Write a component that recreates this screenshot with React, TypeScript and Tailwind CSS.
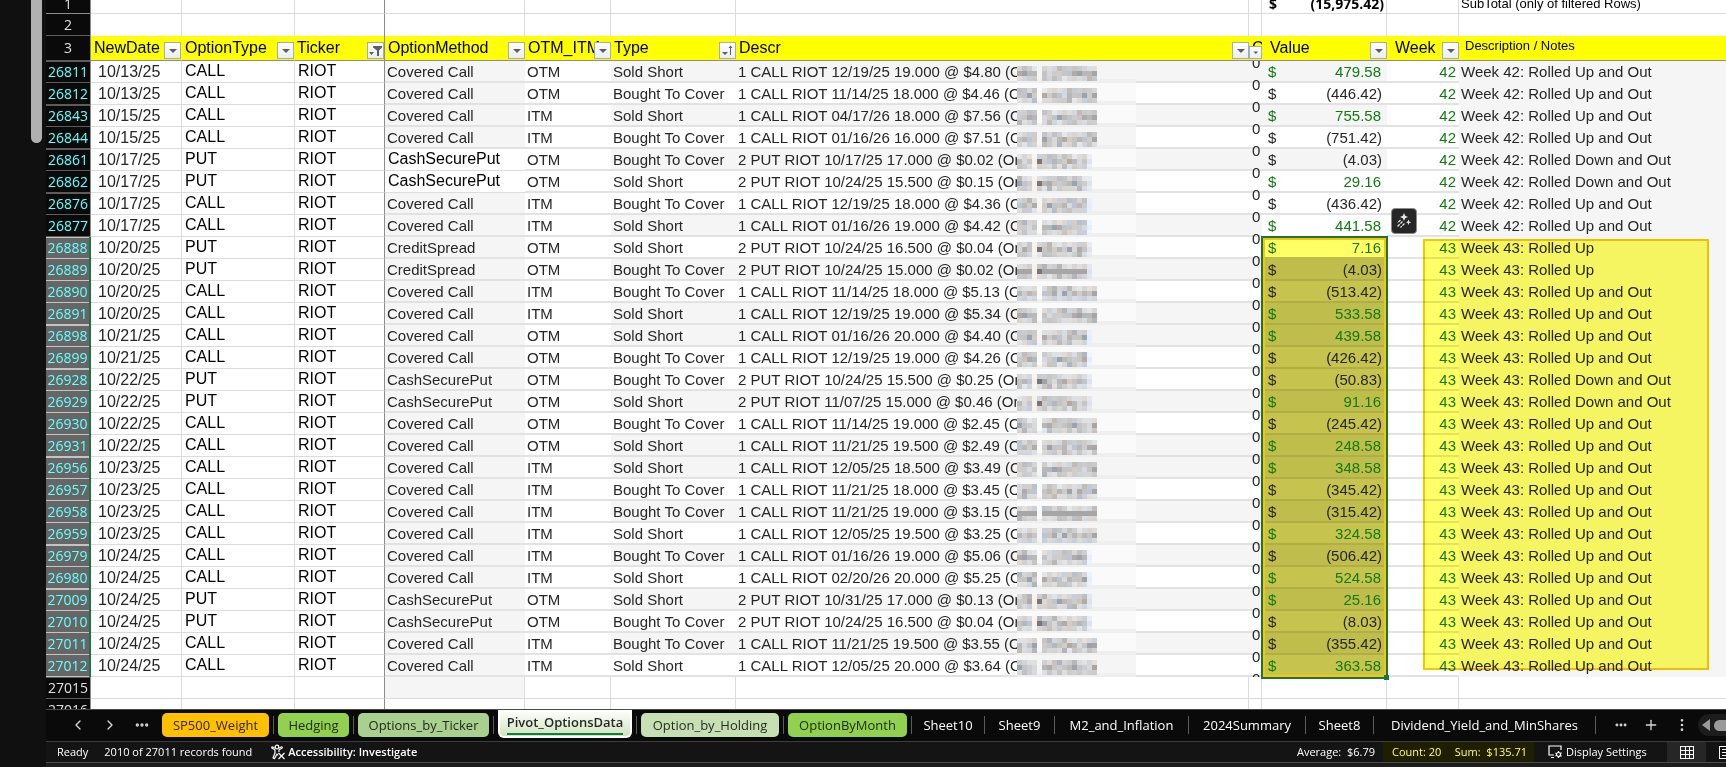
import React from 'react';
import clsx from 'clsx';
import { ChevronLeft, ChevronRight, Ellipsis, EllipsisVertical, Plus } from 'lucide-react';

interface Trade {
  row: string;
  date: string;
  type: 'CALL' | 'PUT';
  method: string;
  otm: string;
  side: string;
  descr: string;
  value: string;
  note: string;
  shaded?: boolean;
  gapAfter?: boolean;
}

const SHORT = 'Sold Short';
const COVER = 'Bought To Cover';
const CC = 'Covered Call';
const CSP = 'CashSecurePut';
const UP = 'Rolled Up';
const UP_OUT = 'Rolled Up and Out';
const DOWN_OUT = 'Rolled Down and Out';

const TRADES: Trade[] = [
  { row: '26811', date: '10/13/25', type: 'CALL', method: CC, otm: 'OTM', side: SHORT, descr: '12/19/25 19.000 @ $4.80', value: '479.58', note: UP_OUT, shaded: true },
  { row: '26812', date: '10/13/25', type: 'CALL', method: CC, otm: 'OTM', side: COVER, descr: '11/14/25 18.000 @ $4.46', value: '(446.42)', note: UP_OUT, gapAfter: true },
  { row: '26843', date: '10/15/25', type: 'CALL', method: CC, otm: 'ITM', side: SHORT, descr: '04/17/26 18.000 @ $7.56', value: '755.58', note: UP_OUT, shaded: true },
  { row: '26844', date: '10/15/25', type: 'CALL', method: CC, otm: 'ITM', side: COVER, descr: '01/16/26 16.000 @ $7.51', value: '(751.42)', note: UP_OUT, gapAfter: true },
  { row: '26861', date: '10/17/25', type: 'PUT', method: CSP, otm: 'OTM', side: COVER, descr: '10/17/25 17.000 @ $0.02', value: '(4.03)', note: DOWN_OUT, shaded: true },
  { row: '26862', date: '10/17/25', type: 'PUT', method: CSP, otm: 'OTM', side: SHORT, descr: '10/24/25 15.500 @ $0.15', value: '29.16', note: DOWN_OUT, gapAfter: true },
  { row: '26876', date: '10/17/25', type: 'CALL', method: CC, otm: 'ITM', side: COVER, descr: '12/19/25 18.000 @ $4.36', value: '(436.42)', note: UP_OUT },
  { row: '26877', date: '10/17/25', type: 'CALL', method: CC, otm: 'ITM', side: SHORT, descr: '01/16/26 19.000 @ $4.42', value: '441.58', note: UP_OUT, shaded: true, gapAfter: true },
  { row: '26888', date: '10/20/25', type: 'PUT', method: 'CreditSpread', otm: 'OTM', side: SHORT, descr: '10/24/25 16.500 @ $0.04', value: '7.16', note: UP },
  { row: '26889', date: '10/20/25', type: 'PUT', method: 'CreditSpread', otm: 'OTM', side: COVER, descr: '10/24/25 15.000 @ $0.02', value: '(4.03)', note: UP, shaded: true },
  { row: '26890', date: '10/20/25', type: 'CALL', method: CC, otm: 'ITM', side: COVER, descr: '11/14/25 18.000 @ $5.13', value: '(513.42)', note: UP_OUT },
  { row: '26891', date: '10/20/25', type: 'CALL', method: CC, otm: 'ITM', side: SHORT, descr: '12/19/25 19.000 @ $5.34', value: '533.58', note: UP_OUT, shaded: true, gapAfter: true },
  { row: '26898', date: '10/21/25', type: 'CALL', method: CC, otm: 'OTM', side: SHORT, descr: '01/16/26 20.000 @ $4.40', value: '439.58', note: UP_OUT, shaded: true },
  { row: '26899', date: '10/21/25', type: 'CALL', method: CC, otm: 'OTM', side: COVER, descr: '12/19/25 19.000 @ $4.26', value: '(426.42)', note: UP_OUT, gapAfter: true },
  { row: '26928', date: '10/22/25', type: 'PUT', method: CSP, otm: 'OTM', side: COVER, descr: '10/24/25 15.500 @ $0.25', value: '(50.83)', note: DOWN_OUT },
  { row: '26929', date: '10/22/25', type: 'PUT', method: CSP, otm: 'OTM', side: SHORT, descr: '11/07/25 15.000 @ $0.46', value: '91.16', note: DOWN_OUT, shaded: true },
  { row: '26930', date: '10/22/25', type: 'CALL', method: CC, otm: 'OTM', side: COVER, descr: '11/14/25 19.000 @ $2.45', value: '(245.42)', note: UP_OUT },
  { row: '26931', date: '10/22/25', type: 'CALL', method: CC, otm: 'OTM', side: SHORT, descr: '11/21/25 19.500 @ $2.49', value: '248.58', note: UP_OUT, shaded: true, gapAfter: true },
  { row: '26956', date: '10/23/25', type: 'CALL', method: CC, otm: 'ITM', side: SHORT, descr: '12/05/25 18.500 @ $3.49', value: '348.58', note: UP_OUT, shaded: true },
  { row: '26957', date: '10/23/25', type: 'CALL', method: CC, otm: 'ITM', side: COVER, descr: '11/21/25 18.000 @ $3.45', value: '(345.42)', note: UP_OUT },
  { row: '26958', date: '10/23/25', type: 'CALL', method: CC, otm: 'ITM', side: COVER, descr: '11/21/25 19.000 @ $3.15', value: '(315.42)', note: UP_OUT, shaded: true },
  { row: '26959', date: '10/23/25', type: 'CALL', method: CC, otm: 'ITM', side: SHORT, descr: '12/05/25 19.500 @ $3.25', value: '324.58', note: UP_OUT, gapAfter: true },
  { row: '26979', date: '10/24/25', type: 'CALL', method: CC, otm: 'ITM', side: COVER, descr: '01/16/26 19.000 @ $5.06', value: '(506.42)', note: UP_OUT, shaded: true },
  { row: '26980', date: '10/24/25', type: 'CALL', method: CC, otm: 'ITM', side: SHORT, descr: '02/20/26 20.000 @ $5.25', value: '524.58', note: UP_OUT, gapAfter: true },
  { row: '27009', date: '10/24/25', type: 'PUT', method: CSP, otm: 'OTM', side: SHORT, descr: '10/31/25 17.000 @ $0.13', value: '25.16', note: UP_OUT, shaded: true },
  { row: '27010', date: '10/24/25', type: 'PUT', method: CSP, otm: 'OTM', side: COVER, descr: '10/24/25 16.500 @ $0.04', value: '(8.03)', note: UP_OUT },
  { row: '27011', date: '10/24/25', type: 'CALL', method: CC, otm: 'ITM', side: COVER, descr: '11/21/25 19.500 @ $3.55', value: '(355.42)', note: UP_OUT, shaded: true },
  { row: '27012', date: '10/24/25', type: 'CALL', method: CC, otm: 'ITM', side: SHORT, descr: '12/05/25 20.000 @ $3.64', value: '363.58', note: UP_OUT, gapAfter: true },
];

const FIRST_SELECTED = 8;
const SHORT_IDS = [6, 7, 12, 13, 22, 23];

const LINE = 'shadow-[inset_0_-2px_0_#e2e2e2]';
const THIN_LINE = 'border-b border-[#dcdcdc]';

// Pixelated block that hides the order number
const MOSAIC = ['#b9b9ba', '#c9c5c4', '#a8a5a6', '#bdc5d2', '#c4c4c4', '#b3aaa4', '#d6dade', '#9ca2ae', '#cccccc', '#b5b7b9', '#d3cbc6'];

const Mosaic = ({ seed, put }: { seed: number; put: boolean }) => {
  const cols = put || SHORT_IDS.includes(seed) ? 15 : 16;
  const cells: React.ReactNode[] = [];
  for (let y = 0; y < 3; y++) {
    for (let x = 0; x < cols; x++) {
      if (x === 4 && !put) continue;
      const n = (seed * 7 + x * 13 + y * 5 + ((x * y * seed) % 11)) % MOSAIC.length;
      let fill = MOSAIC[n];
      if (put && x === 3) fill = '#f6f1ea';
      if (put && x === 4 && y === 1) fill = '#7d7574';
      if (x === cols - 1 && cols === 15) fill = put ? '#dfe4ec' : '#e3f0fb';
      cells.push(
        <rect key={`${x}-${y}`} x={x * 5} y={5 + y * 5} width="5" height="5" fill={fill} opacity={y === 1 ? 1 : 0.55 + ((x + seed) % 3) * 0.12} />,
      );
    }
  }
  return (
    <svg className="absolute top-0 left-[281px]" width="119" height="22" shapeRendering="crispEdges" aria-hidden="true">
      <rect width="119" height="22" fill={seed % 3 ? '#fafafa' : '#f5f5f5'} />
      <rect y="18" width="119" height="4" fill="#efefef" />
      {cells}
    </svg>
  );
};

const FilterButton = ({ label, kind = 'plain', small = false }: { label: string; kind?: 'plain' | 'funnel' | 'sort'; small?: boolean }) => (
  <button
    type="button"
    aria-label={`Filter ${label}`}
    className={clsx(
      'absolute right-0 bottom-px flex items-center justify-center border border-[#a3acb9] bg-gradient-to-b from-white to-[#e9edf5]',
      small ? 'h-[13px] w-[13px]' : 'h-[17px] w-[17px]',
    )}
  >
    <svg width={small ? 9 : 15} height={small ? 9 : 15} viewBox="0 0 15 15" fill="#5f5f5f">
      {kind === 'plain' && <path d="M4 6h8L8 10z" />}
      {kind === 'funnel' && <path d="M1 9h5l-2.500 3zM5 3h9v1.500l-3 3V13H9V7.500l-4-3z" />}
      {kind === 'sort' && <path d="M2 9h6l-3 3zM10 12V5H8.500L10.500 2.500 12.500 5H11v7z" />}
    </svg>
  </button>
);

interface HeadProps {
  label: string;
  className?: string;
  kind?: 'plain' | 'funnel' | 'sort';
}

const HeadCell = ({ label, className, kind }: HeadProps) => (
  <th scope="col" className={clsx('relative h-[25px] overflow-hidden border-b border-b-[#8c8c8c] bg-[#ffff00] p-0 text-left text-base leading-6 font-normal whitespace-nowrap', className)}>
    {label}
    <FilterButton label={label} kind={kind} />
  </th>
);

interface RowHeadProps {
  label: string;
  tone?: 'plain' | 'filtered' | 'selected';
  gapBefore?: boolean;
  gapAfter?: boolean;
}

const RowHead = ({ label, tone = 'plain', gapBefore, gapAfter }: RowHeadProps) => (
  <th
    scope="row"
    className={clsx(
      'h-[22px] p-0 text-center align-top font-[Open_Sans,sans-serif] text-sm font-normal',
      tone === 'plain' && 'border-r border-[#8c8c8c] bg-[#0a0a0a] text-[#e0e0e0]',
      tone === 'filtered' && 'border-r border-[#8c8c8c] bg-[#0a0a0a] text-[#66ffff]',
      tone === 'selected' && 'border-r-2 border-[#1e7145] bg-[#666666] text-[#66ffff]',
    )}
  >
    <div
      className={clsx(
        'flex h-full flex-col justify-center border-b leading-4',
        tone === 'selected' ? 'border-[#c4c4c4]' : 'border-[#5c5c5c]',
        gapBefore && 'border-t',
      )}
    >
      {label}
    </div>
    {gapAfter && <div className="h-[2px]" />}
  </th>
);

const TradeRow = ({ t, index }: { t: Trade; index: number }) => {
  const selected = index >= FIRST_SELECTED;
  const active = index === FIRST_SELECTED;
  const bigMethod = index === 4 || index === 5;
  const negative = t.value.startsWith('(');
  const shade = t.shaded ? 'bg-[#f5f5f5]' : 'bg-white';
  const gapBefore = index === 0 || TRADES[index - 1].gapAfter;
  return (
    <tr className="h-[22px] text-[15px] leading-[22px] whitespace-nowrap text-[#262626]">
      <RowHead label={t.row} tone={selected ? 'selected' : 'filtered'} gapBefore={gapBefore} gapAfter={t.gapAfter} />
      <td className={clsx('border-r p-0 pl-[7px] text-base leading-[21px]', THIN_LINE)}>{t.date}</td>
      <td className={clsx('border-r p-0 pl-[3px] align-top text-base leading-5 text-black', THIN_LINE)}>{t.type}</td>
      <td className="border-r border-b border-r-[#8c8c8c] border-b-[#dcdcdc] p-0 pl-[3px] align-top text-base leading-5 text-black">RIOT</td>
      <td className={clsx('p-0', bigMethod ? 'bg-white pl-[3px] align-top text-base leading-5 text-black' : 'bg-[#f5f5f5] pl-[2px]', bigMethod ? THIN_LINE : LINE)}>
        {t.method}
      </td>
      <td className={clsx('p-0 pl-[2px]', LINE)}>{t.otm}</td>
      <td className={clsx('p-0 pl-[2px]', shade, LINE)}>{t.side}</td>
      <td className={clsx('relative overflow-hidden p-0 pl-[2px]', shade, LINE)}>
        {t.type === 'CALL' ? '1 CALL' : '2 PUT'} RIOT {t.descr} (Order
        <Mosaic seed={index} put={t.type === 'PUT'} />
      </td>
      <td className={clsx('p-0', shade, LINE)}>
        <div className="flex h-[22px] flex-col justify-center overflow-hidden pt-1 pl-[3px]">
          <span>0</span>
          <span>0</span>
        </div>
      </td>
      <td
        className={clsx(
          'relative p-0 pr-[6px] pl-[6px]',
          !selected && (index === 7 ? 'bg-white' : clsx(shade, LINE)),
          active && 'bg-[#ffff66] shadow-[inset_0_-2px_0_#bdbb48]',
          selected && !active && (t.shaded ? 'bg-[#bfbd4b]' : 'bg-[#c6c44f]'),
          selected && !active && 'shadow-[inset_0_-2px_0_#b0ae44]',
          negative ? 'text-[#262626]' : 'text-[#107c10]',
        )}
      >
        <div className="flex justify-between">
          <span>$</span>
          <span className={negative ? '-mr-px' : ''}>{t.value}</span>
        </div>
        {active && (
          <div className="pointer-events-none absolute -top-px -right-px -left-px z-10 h-[443px] border-2 border-[#1e7145]">
            <div className="h-full border-2 border-[#f5c800]" />
            <div className="absolute -right-[3px] -bottom-[3px] h-[5px] w-[5px] bg-[#1e7145]" />
          </div>
        )}
      </td>
      <td className={clsx('relative p-0 pr-[3px] text-right text-[#107c10]', LINE)}>
        {selected ? 43 : 42}
        {index === 7 && (
          <button type="button" aria-label="Quick Analysis" className="absolute -top-[7px] left-1 z-20 flex h-[26px] w-[26px] items-center justify-center rounded border border-[#8a8a8a] bg-[#262626]">
            <svg width="16" height="16" viewBox="0 0 16 16" fill="#e6e6e6" stroke="#e6e6e6">
              <path d="M8 0l1.200 2.800L12 4 9.200 5.200 8 8 6.800 5.200 4 4l2.800-1.200zM12.500 6.500l.8 1.900 1.900.8-1.900.8-.8 1.900-.8-1.900-1.900-.8 1.900-.8z" stroke="none" />
              <path d="M4.500 7L1.500 10M6.500 8.500l-5 5M8.500 10.500l-4 4" strokeWidth="1.300" strokeDasharray="3 1" fill="none" />
            </svg>
          </button>
        )}
      </td>
      <td className="relative bg-[#f5f5f5] p-0 pl-[2px]">
        Week {selected ? 43 : 42}: {t.note}
        {active && (
          <div className="pointer-events-none absolute top-[2px] -left-9 z-10 h-[431px] w-[286px] border-2 border-[#f5c800] bg-[#ffff00]/60 mix-blend-multiply" />
        )}
      </td>
    </tr>
  );
};

const Sheet = () => (
  <table className="w-full table-fixed border-separate border-spacing-0 bg-white font-[Liberation_Sans,Arial,sans-serif]">
    <colgroup>
      <col className="w-[45px]" />
      <col className="w-[91px]" />
      <col className="w-[113px]" />
      <col className="w-[90px]" />
      <col className="w-[140px]" />
      <col className="w-[86px]" />
      <col className="w-[125px]" />
      <col className="w-[513px]" />
      <col className="w-[13px]" />
      <col className="w-[125px]" />
      <col className="w-[72px]" />
      <col />
    </colgroup>
    <thead>
      <tr className="text-[13px] leading-[14px] whitespace-nowrap text-black">
        <th scope="row" className="border-r border-b border-[#8c8c8c] bg-[#0a0a0a] p-0 font-[Open_Sans,sans-serif] text-sm font-normal text-[#e0e0e0]">
          <div className="flex h-[13px] items-end justify-center overflow-hidden pb-px leading-4">1</div>
        </th>
        {[0, 1, 2, 3, 4, 5, 6, 7].map((i) => (
          <td key={i} className={clsx('border-r border-b border-b-[#dcdcdc] p-0', i === 2 ? 'border-r-[#8c8c8c]' : 'border-r-[#dcdcdc]')} />
        ))}
        <td className="border-r border-b border-[#dcdcdc] p-0 font-[Open_Sans,sans-serif] text-sm font-bold">
          <div className="flex h-[13px] items-end justify-between overflow-hidden pr-[2px] pb-px pl-[7px] leading-4">
            <span>$</span>
            <span>(15,975.42)</span>
          </div>
        </td>
        <td className="border-r border-b border-[#dcdcdc] p-0" />
        <td className="border-b border-[#dcdcdc] p-0">
          <div className="flex h-[13px] items-end overflow-hidden pb-px pl-[2px] leading-4">SubTotal (only of filtered Rows)</div>
        </td>
      </tr>
      <tr>
        <RowHead label="2" />
        {[0, 1, 2, 3, 4, 5, 6, 7, 8, 9].map((i) => (
          <td key={i} className={clsx('border-r p-0', i === 2 ? 'border-[#8c8c8c]' : 'border-[#dcdcdc]')} />
        ))}
        <td className="p-0" />
      </tr>
      <tr className="text-black">
        <RowHead label="3" gapAfter />
        <HeadCell label="NewDate" className="border-r border-r-[#ffff00] pl-[3px]" />
        <HeadCell label="OptionType" className="border-r border-r-[#ffff00] pl-[3px]" />
        <HeadCell label="Ticker" kind="funnel" className="border-r border-r-[#8c8c8c] pl-[2px]" />
        <HeadCell label="OptionMethod" className="pl-[3px]" />
        <HeadCell label="OTM_ITM" className="pl-[3px]" />
        <HeadCell label="Type" kind="sort" className="pl-[3px]" />
        <HeadCell label="Descr" className="pl-[3px]" />
        <th scope="col" className="relative overflow-hidden border-b border-[#8c8c8c] bg-[#ffff00] p-0 pl-[3px] text-left text-base leading-6 font-normal">
          C
          <FilterButton label="C" small />
        </th>
        <HeadCell label="Value" className="pl-2" />
        <HeadCell label="Week" className="pl-2" />
        <th scope="col" className="border-b border-[#8c8c8c] bg-[#ffff00] p-0 pl-[6px] text-left align-top text-[13px] leading-5 font-normal">
          Description / Notes
        </th>
      </tr>
    </thead>
    <tbody>
      {TRADES.map((t, i) => (
        <TradeRow key={t.row} t={t} index={i} />
      ))}
      {['27015', '27016'].map((label, r) => (
        <tr key={label}>
          <RowHead label={label} gapBefore={r === 0} />
          {[0, 1, 2, 3, 4, 5, 6, 7, 8, 9, 10].map((i) => (
            <td
              key={i}
              className={clsx(
                'border-b border-b-[#dcdcdc] p-0',
                i < 10 && 'border-r',
                i === 2 ? 'border-r-[#8c8c8c]' : 'border-r-[#dcdcdc]',
                i === 3 && r === 0 && 'bg-[#f5f5f5]',
              )}
            />
          ))}
        </tr>
      ))}
    </tbody>
  </table>
);

const TABS = [
  { name: 'SP500_Weight', className: 'w-[107px] bg-[#ffc000] text-[#332600]' },
  { name: 'Hedging', className: 'w-[71px] bg-[#92d050] text-[#1d2a10]' },
  { name: 'Options_by_Ticker', className: 'w-[131px] bg-[#a9d08e] text-[#222a1c]' },
  { name: 'Pivot_OptionsData', className: 'w-[134px]', active: true },
  { name: 'Option_by_Holding', className: 'w-[138px] bg-[#c6e0b4] text-[#282d24]' },
  { name: 'OptionByMonth', className: 'w-[119px] bg-[#92d050] text-[#1d2a10]' },
  { name: 'Sheet10', className: 'w-[64px] text-white' },
  { name: 'Sheet9', className: 'w-[61px] text-white' },
  { name: 'M2_and_Inflation', className: 'w-[125px] text-white' },
  { name: '2024Summary', className: 'w-[108px] text-white' },
  { name: 'Sheet8', className: 'w-[59px] text-white' },
  { name: 'Dividend_Yield_and_MinShares', className: 'w-[213px] text-white' },
];

const TabBar = () => (
  <nav aria-label="Sheets" className="flex h-8 shrink-0 items-start overflow-hidden border-t border-[#4a4a4a] bg-[#0a0a0a] text-[13px] whitespace-nowrap text-white">
    <div className="flex h-[30px] w-[116px] shrink-0 items-center justify-between pr-3 pl-6 text-[#d6d6d6]">
      <button type="button" aria-label="Previous sheet"><ChevronLeft size={16} /></button>
      <button type="button" aria-label="Next sheet"><ChevronRight size={16} /></button>
      <button type="button" aria-label="More sheets"><Ellipsis size={16} strokeWidth={3} /></button>
    </div>
    {TABS.map((tab) => (
      <React.Fragment key={tab.name}>
        {tab.active ? (
          <button type="button" className={clsx('flex h-7 shrink-0 flex-col items-center rounded-b-md border-2 border-t-0 border-white bg-gradient-to-b from-white to-[#cfe5bd] pt-[2px] font-semibold text-[#262626]', tab.className)}>
            <span className="border-b-2 border-[#107c41] leading-[21px]">{tab.name}</span>
          </button>
        ) : (
          <button type="button" className={clsx('mt-[3px] h-6 shrink-0 rounded-[5px] pt-px text-center', tab.className)}>{tab.name}</button>
        )}
        <span className="mx-1 mt-[6px] h-[18px] w-px shrink-0 bg-[#5c5c5c]" />
      </React.Fragment>
    ))}
    <div className="flex h-[30px] flex-1 items-center justify-end gap-[15px] text-[#d6d6d6]">
      <button type="button" aria-label="Hidden sheets"><Ellipsis size={14} strokeWidth={3} /></button>
      <button type="button" aria-label="New sheet"><Plus size={16} strokeWidth={2} /></button>
      <EllipsisVertical size={16} />
      <div className="-ml-[7px] flex h-[22px] w-[28px] shrink-0 items-center gap-1 overflow-hidden rounded-l-full bg-[#1c1c1c] pl-1">
        <svg width="8" height="12" viewBox="0 0 8 12" className="shrink-0" fill="#9a9a9a"><path d="M8 0v12L0 6z" /></svg>
        <span className="h-[11px] w-6 shrink-0 rounded-full bg-[#9a9a9a]" />
      </div>
    </div>
  </nav>
);

const StatusBar = () => (
  <footer className="flex shrink-0 flex-col border-t border-[#3d3d3d] bg-[#141414] text-[11px] font-medium whitespace-nowrap text-white">
    <div className="flex h-[21px] items-center border-b border-[#4a4a4a] pl-[11px]">
      <span>Ready</span>
      <span className="ml-4">2010 of 27011 records found</span>
      <button type="button" className="ml-[18px] flex items-center gap-[2px] font-semibold">
        <svg width="16" height="16" viewBox="0 0 16 16" fill="none" stroke="white" strokeWidth="1.200" strokeLinejoin="round">
          <circle cx="7" cy="3" r="1.800" />
          <path d="M1.500 4l3.500 1.800v3L3 14l1.500.6L7 10l1 1.500M12.500 4L9 5.800V8M1.500 4l.6-1.200L5 4M12.500 4l-.6-1.200L9 4" />
          <path d="M8.500 9l6 6M14.500 9l-6 6" />
        </svg>
        Accessibility: Investigate
      </button>
      <div className="ml-auto flex h-full items-center">
        <span>Average:&nbsp; $6.79</span>
        <div className="ml-2 flex h-full w-[151px] items-center justify-between bg-[#1f1f00] pr-[7px] pl-[9px] text-[#ffff66]">
          <span>Count: 20</span>
          <span>Sum:&nbsp; $135.71</span>
        </div>
        <button type="button" className="ml-[14px] flex w-[119px] items-center gap-[3px]">
          <svg width="15" height="14" viewBox="0 0 15 14" fill="none" stroke="white" strokeWidth="1.200">
            <path d="M6 10H1V1h12v4M3 12.500h3" />
            <circle cx="10.500" cy="9.500" r="2" />
            <path d="M10.500 6v1.500M10.500 11.500V13M7.500 8l1.300.7M12.300 10.500l1.300.7M7.500 11l1.300-.7M12.300 8.500l1.300-.7" />
          </svg>
          Display Settings
        </button>
        <button type="button" aria-label="Normal view" className="flex h-full w-[39px] items-center justify-center bg-[#262626]">
          <svg width="14" height="13" viewBox="0 0 14 13" fill="none" stroke="white" shapeRendering="crispEdges">
            <path d="M.5.5h13v12H.5zM5 .5v12M9 .5v12M.5 4.500h13M.5 8.500h13" />
          </svg>
        </button>
        <button type="button" aria-label="Page layout view" className="flex w-5 justify-end overflow-hidden pl-[13px]">
          <svg width="7" height="13" viewBox="0 0 7 13" fill="none" stroke="white" shapeRendering="crispEdges">
            <path d="M8 .5H.5v12H8M3 3.500h4M3 6.500h4M3 9.500h4" />
          </svg>
        </button>
      </div>
    </div>
    <div className="h-1 bg-[#1c1c1c]" />
  </footer>
);

export default function App() {
  return (
    <div className="flex h-screen w-full overflow-hidden bg-[#101010] font-[Open_Sans,sans-serif]">
      <aside className="flex w-[46px] shrink-0 justify-end pr-1">
        <div className="h-[143px] w-[11px] rounded-b-full bg-[#b0b0b0]" />
      </aside>
      <main className="flex min-w-0 flex-1 flex-col">
        <div className="min-h-0 flex-1 overflow-hidden bg-white">
          <Sheet />
        </div>
        <TabBar />
        <StatusBar />
      </main>
    </div>
  );
}
